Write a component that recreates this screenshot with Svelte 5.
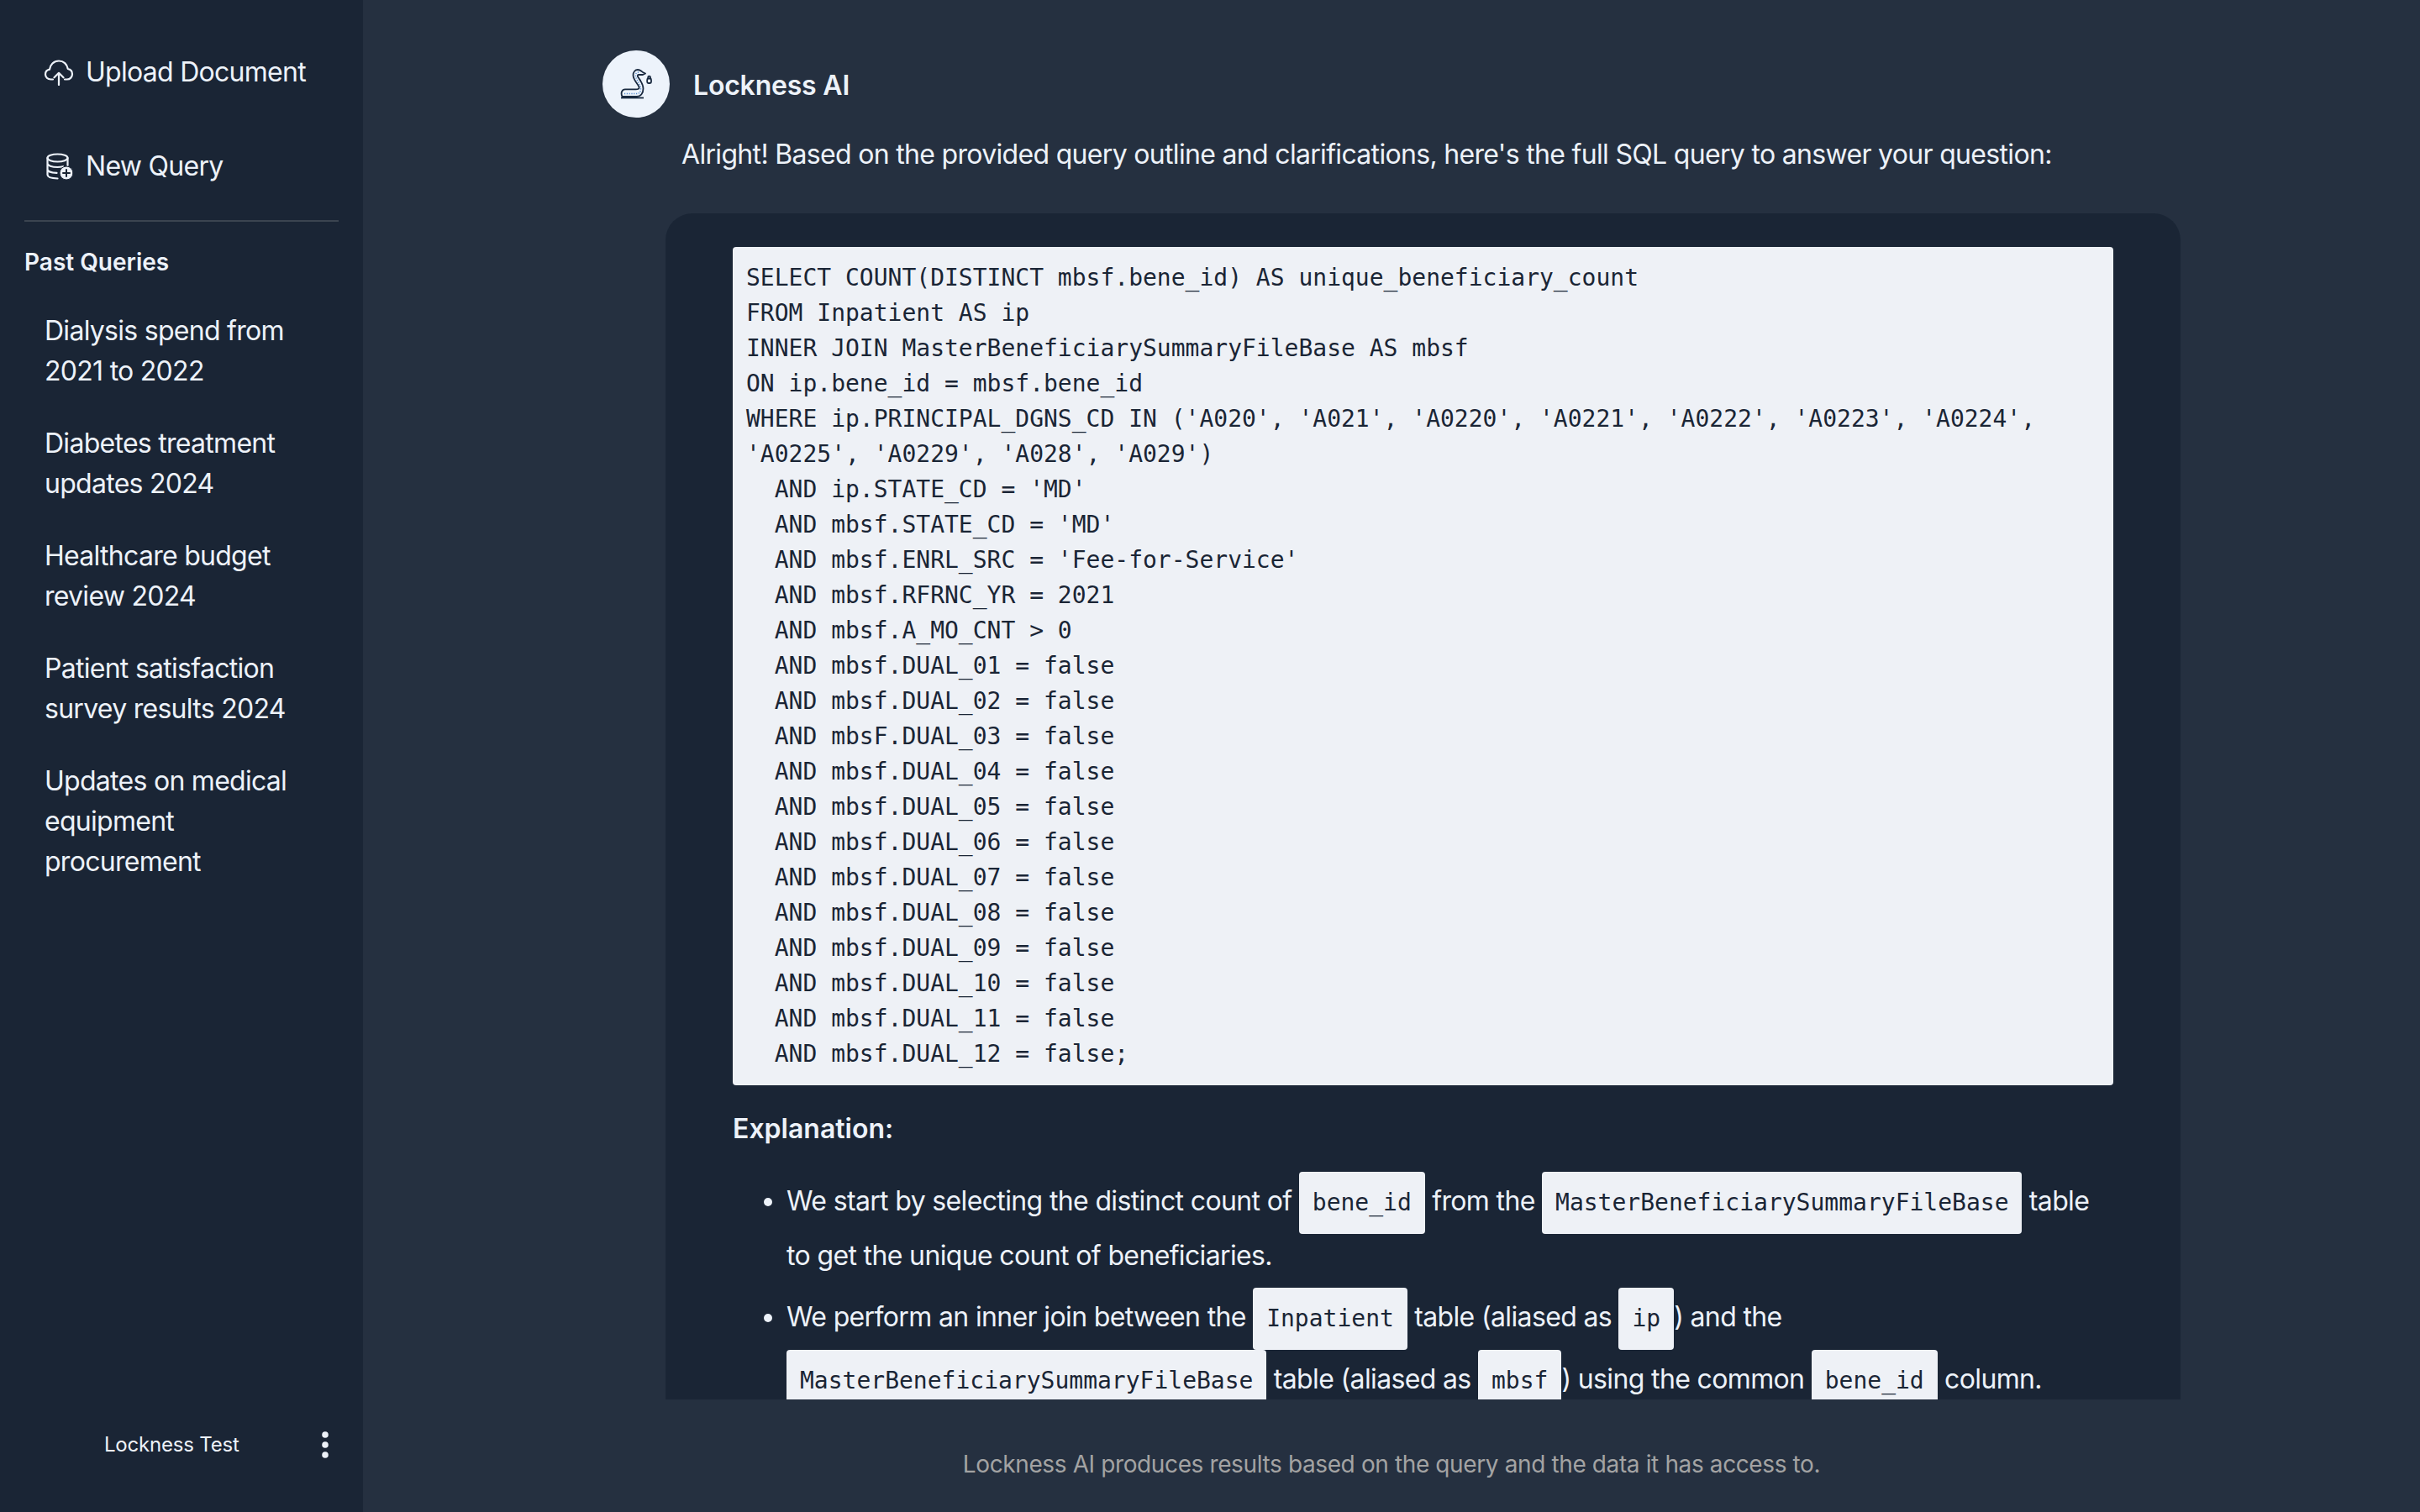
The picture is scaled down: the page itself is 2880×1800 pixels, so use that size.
<script>
  const pastQueries = [
    "Dialysis spend from 2021 to 2022",
    "Diabetes treatment updates 2024",
    "Healthcare budget review 2024",
    "Patient satisfaction survey results 2024",
    "Updates on medical equipment procurement",
  ];

  const dualFlags = ["01", "02", "03", "04", "05", "06", "07", "08", "09", "10", "11", "12"];

  const sql = [
    "SELECT COUNT(DISTINCT mbsf.bene_id) AS unique_beneficiary_count",
    "FROM Inpatient AS ip",
    "INNER JOIN MasterBeneficiarySummaryFileBase AS mbsf",
    "ON ip.bene_id = mbsf.bene_id",
    "WHERE ip.PRINCIPAL_DGNS_CD IN ('A020', 'A021', 'A0220', 'A0221', 'A0222', 'A0223', 'A0224', 'A0225', 'A0229', 'A028', 'A029')",
    "  AND ip.STATE_CD = 'MD'",
    "  AND mbsf.STATE_CD = 'MD'",
    "  AND mbsf.ENRL_SRC = 'Fee-for-Service'",
    "  AND mbsf.RFRNC_YR = 2021",
    "  AND mbsf.A_MO_CNT > 0",
    ...dualFlags.map((n, i) => {
      const table = n === "03" ? "mbsF" : "mbsf";
      return `  AND ${table}.DUAL_${n} = false${i === dualFlags.length - 1 ? ";" : ""}`;
    }),
  ].join("\n");
</script>

<div class="shell">
  <aside class="sidebar">
    <nav class="actions">
      <button class="action">
        <svg class="action-icon" viewBox="0 0 36 32" aria-hidden="true">
          <path d="M11 24.500H8.500C4.600 24.500 2 21.800 2 18.600c0-2.900 2-5.300 5-5.900C7.600 7 12 2.500 18 2.500c5.800 0 9.800 4 10.700 9.300 3.300.6 5.300 3.300 5.300 6.400 0 3.400-2.500 6.300-6.200 6.300H25" />
          <path d="M18 31V17M12.500 22.300 18 16.800l5.500 5.500" />
        </svg>
        <span>Upload Document</span>
      </button>
      <button class="action">
        <svg class="action-icon" viewBox="0 0 36 32" aria-hidden="true">
          <ellipse cx="16.500" cy="6" rx="12" ry="4.500" />
          <path d="M4.500 6v20c0 2.500 4.500 4.300 12 4.500M28.500 6v9M4.500 12.500c0 2.500 5 4.500 12 4.500 2.500 0 4.500-.3 6.500-.8M4.500 19.500c0 2.400 4.500 4.200 11 4.400" />
          <circle class="plus-disc" cx="27" cy="24" r="8" />
          <path class="plus-mark" d="M27 20v8M23 24h8" />
        </svg>
        <span>New Query</span>
      </button>
    </nav>
    <hr class="rule" />
    <h2 class="past-title">Past Queries</h2>
    <ul class="past-list">
      {#each pastQueries as query}
        <li>{query}</li>
      {/each}
    </ul>
    <div class="account">
      <span class="account-name">Lockness Test</span>
      <svg class="kebab" viewBox="0 0 8 32" aria-hidden="true">
        <circle cx="4" cy="4" r="3.800" />
        <circle cx="4" cy="16" r="3.800" />
        <circle cx="4" cy="28" r="3.800" />
      </svg>
    </div>
  </aside>

  <main class="main">
    <div class="scroll">
      <header class="message-head">
        <div class="avatar">
          <svg viewBox="0 0 37 36" aria-hidden="true">
            <path class="snake-ink" d="M1.500 33C-.5 29 1 24.300 5 24.300h12.500c3 0 4.500-.8 4-2.800-1-3-7-8.500-7-14 0-4 2.500-6.500 5.500-6.500s4.500 2 6 3l3 1.500-3 1.500h-5c-1.500 0-1.500 1.500-.5 3 2 3.500 6 7 6 13.500 0 5.500-3 9.500-7.500 9.500z" />
            <path class="snake-ink" d="M0 34.500h27" />
            <path class="snake-dots" d="M4 29.500h15c3 0 4.500-2.500 4.500-5.500 0-6-6-11-6-16.500 0-2 1.500-3.500 3.500-3.500" />
            <path class="snake-ink" d="M32.200 11.500V10a1.400 1.400 0 0 1 2.800 0v1.500" />
            <rect class="snake-ink" x="31.200" y="11.500" width="4.800" height="5.500" rx="1.500" />
          </svg>
        </div>
        <h1 class="sender">Lockness AI</h1>
      </header>
      <p class="intro">Alright! Based on the provided query outline and clarifications, here's the full SQL query to answer your question:</p>

      <section class="answer">
        <pre class="sql">{sql}</pre>
        <p class="explain-title">Explanation:</p>
        <ul class="explain">
          <li>We start by selecting the distinct count of <code>bene_id</code> from the <code>MasterBeneficiarySummaryFileBase</code> table to get the unique count of beneficiaries.</li>
          <li>We perform an inner join between the <code>Inpatient</code> table (aliased as <code>ip</code>) and the <code>MasterBeneficiarySummaryFileBase</code> table (aliased as <code>mbsf</code>) using the common <code>bene_id</code> column.</li>
        </ul>
      </section>
    </div>
    <footer class="disclaimer">Lockness AI produces results based on the query and the data it has access to.</footer>
  </main>
</div>

<style>
  :global(body) {
    margin: 0;
    background: #253040;
  }

  .shell {
    display: flex;
    width: 2880px;
    height: 1800px;
    overflow: hidden;
    font-family: Inter, "Noto Sans", sans-serif;
    font-weight: 400;
    color: #edf2f9;
  }

  .sidebar {
    display: flex;
    flex-direction: column;
    flex: none;
    box-sizing: border-box;
    width: 432px;
    height: 100%;
    padding: 0 29px;
    background: #1a2535;
  }

  .actions {
    display: flex;
    flex-direction: column;
    gap: 64px;
    padding-top: 62px;
  }

  .action {
    display: flex;
    align-items: center;
    gap: 14px;
    height: 48px;
    padding: 0 0 0 23px;
    border: 0;
    background: none;
    color: inherit;
    font: 400 32px/48px Inter, "Noto Sans", sans-serif;
    letter-spacing: -0.72px;
  }

  .action-icon {
    flex: none;
    width: 36px;
    height: 32px;
    fill: none;
    stroke: #edf2f9;
    stroke-width: 2.200;
    stroke-linecap: round;
    stroke-linejoin: round;
  }

  .plus-disc {
    fill: #edf2f9;
    stroke: #1a2535;
    stroke-width: 1;
  }

  .plus-mark {
    stroke: #1a2535;
    stroke-width: 2;
  }

  .rule {
    width: 100%;
    height: 2px;
    margin: 40px 0 0;
    border: 0;
    background: #3b4450;
  }

  .past-title {
    margin: 31px 0 0;
    font-size: 28px;
    font-weight: 600;
    line-height: 34px;
  }

  .past-list {
    display: flex;
    flex-direction: column;
    gap: 38px;
    margin: 41px 0 0;
    padding: 0 24px;
    list-style: none;
    font-size: 32px;
    line-height: 48px;
    letter-spacing: -0.72px;
  }

  .account {
    display: flex;
    align-items: center;
    justify-content: space-between;
    margin-top: auto;
    padding: 0 12px 64px 95px;
    font-size: 24px;
    line-height: 32px;
    letter-spacing: -0.2px;
  }

  .kebab {
    width: 8px;
    height: 32px;
    fill: #edf2f9;
  }

  .main {
    display: flex;
    flex-direction: column;
    flex: 1;
    min-width: 0;
  }

  .scroll {
    flex: none;
    box-sizing: border-box;
    height: 1666px;
    padding: 60px 285px 0;
    overflow: hidden;
  }

  .message-head {
    display: flex;
    align-items: center;
    gap: 28px;
  }

  .avatar {
    display: flex;
    align-items: center;
    justify-content: center;
    width: 80px;
    height: 80px;
    border-radius: 50%;
    background: #edf3fb;
  }

  .avatar svg {
    width: 37px;
    height: 36px;
    fill: none;
    overflow: visible;
  }

  .snake-ink {
    stroke: #1a2a40;
    stroke-width: 1.800;
    stroke-linejoin: round;
  }

  .snake-dots {
    stroke: #5b8fd0;
    stroke-width: 1.500;
    stroke-dasharray: 1.200 1.600;
  }

  .sender {
    margin: 0;
    padding-top: 3px;
    font-size: 32px;
    font-weight: 600;
    line-height: 42px;
    letter-spacing: -0.2px;
  }

  .intro {
    margin: 20px 0 0 94px;
    font-size: 32px;
    line-height: 48px;
    letter-spacing: -0.68px;
    white-space: nowrap;
  }

  .answer {
    box-sizing: border-box;
    width: 1803px;
    margin: 46px 0 0 75px;
    padding: 40px 80px;
    border-radius: 32px 32px 0 0;
    background: #1a2535;
  }

  .sql {
    margin: 0;
    padding: 16px;
    border-radius: 4px;
    background: #eef1f6;
    color: #1a2535;
    font: 400 28px/42px "DejaVu Sans Mono", monospace;
    white-space: pre-wrap;
  }

  .explain-title {
    margin: 26px 0 0;
    font-size: 32px;
    font-weight: 600;
    line-height: 52px;
  }

  .explain {
    margin: 25px 0 0;
    padding-left: 64px;
    font-size: 32px;
    line-height: 51px;
    letter-spacing: -0.64px;
  }

  .explain li + li {
    margin-top: 13px;
  }

  code {
    display: inline-block;
    padding: 16px;
    border-radius: 4px;
    background: #eef1f6;
    color: #1a2535;
    font: 400 28px/42px "DejaVu Sans Mono", monospace;
    letter-spacing: 0;
  }

  .disclaimer {
    padding-top: 60px;
    color: #a3a3a3;
    font-size: 28px;
    line-height: 34px;
    letter-spacing: -0.38px;
    text-align: center;
  }
</style>
